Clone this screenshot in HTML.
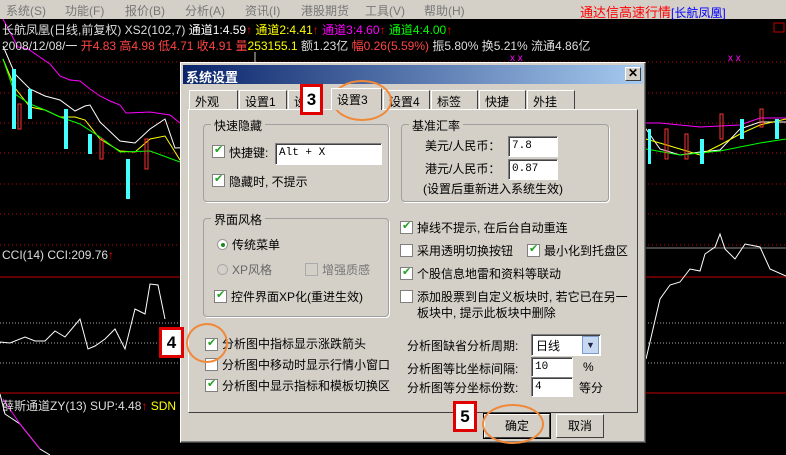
<!DOCTYPE html>
<html><head><meta charset="utf-8"><style>
*{margin:0;padding:0;box-sizing:border-box}
body{width:786px;height:455px;overflow:hidden;background:#000;position:relative;font-family:"Liberation Sans","Noto Sans CJK SC","WenQuanYi Zen Hei",sans-serif;font-size:12px}
.a{position:absolute;white-space:nowrap}
#menu{left:0;top:0;width:786px;height:19px;background:#d4d0c8}
#menu span{position:absolute;top:2px;color:#777;font-size:12px}
.dlg{left:180px;top:62px;width:466px;height:381px;background:#d4d0c8;border:1px solid;border-color:#fff #404040 #404040 #fff;box-shadow:inset -1px -1px #808080}
.title{left:2px;top:2px;width:460px;height:19px;background:linear-gradient(90deg,#0a246a,#a6caf0);color:#fff;font-weight:bold;font-size:13px;padding:2px 3px}
.xb{right:4px;top:4px;width:16px;height:14px;background:#d4d0c8;border:1px solid;border-color:#fff #404040 #404040 #fff;color:#000;font-size:12px;line-height:11px;text-align:center;font-weight:bold}
.tab{top:27px;height:20px;border:1px solid;border-color:#fff #404040 transparent #fff;border-bottom:none;padding:2px 5px;font-size:12px;color:#000;background:#d4d0c8}
.panel{left:7px;top:46px;width:450px;height:304px;border:1px solid;border-color:#fff #404040 #404040 #fff}
.grp{border:1px solid #a0a0a0;border-radius:4px;box-shadow:1px 1px #fff}
.gl{background:#d4d0c8;padding:0 3px;font-size:12px;color:#000}
.cb{width:13px;height:13px;background:#fff;border:1px solid #808080;display:inline-block;position:absolute}
.cb.k::after{content:"✔";position:absolute;left:1px;top:-3px;color:#21a121;font-size:11px}
.t{color:#000;font-size:12px}
.inp{background:#fff;border:1px solid;border-color:#808080 #fff #fff #808080;box-shadow:inset 1px 1px #404040;font-family:"Liberation Mono",monospace;font-size:11px;padding:3px 3px}
.btn{border:1px solid;border-color:#fff #404040 #404040 #fff;background:#d4d0c8;text-align:center;font-size:12px;line-height:22px;color:#000}
.rb{border:3px solid #e00000;background:#fff;color:#000;font-weight:bold;font-size:17px;text-align:center;font-family:"Liberation Sans",sans-serif}
.ov{border:2px solid #f0883a;border-radius:50%}
</style></head><body>
<div id="menu" class="a">
<span style="left:6px">系统(S)</span><span style="left:65px">功能(F)</span><span style="left:125px">报价(B)</span><span style="left:185px">分析(A)</span><span style="left:245px">资讯(I)</span><span style="left:301px">港股期货</span><span style="left:365px">工具(V)</span><span style="left:424px">帮助(H)</span>
<span style="left:580px;color:#f00;font-size:13px;top:2px">通达信高速行情<span style="color:#00f">[长航凤凰]</span></span>
</div>
<svg class="a" style="left:0;top:19px" width="786" height="436">
<g stroke="#c00000" stroke-dasharray="1,3">
<line x1="0" y1="43" x2="786" y2="43"/><line x1="0" y1="74" x2="786" y2="74"/><line x1="0" y1="104" x2="786" y2="104"/><line x1="0" y1="134" x2="786" y2="134"/><line x1="0" y1="165" x2="786" y2="165"/><line x1="0" y1="195" x2="786" y2="195"/><line x1="0" y1="226" x2="786" y2="226"/>
</g>
<line x1="646" y1="229" x2="786" y2="229" stroke="#888"/>
<line x1="0" y1="258" x2="786" y2="258" stroke="#c00000"/>
<g stroke="#aaa" stroke-dasharray="1,2"><line x1="0" y1="304" x2="786" y2="304"/><line x1="0" y1="324" x2="786" y2="324"/><line x1="0" y1="344" x2="786" y2="344"/></g>
<line x1="0" y1="374" x2="786" y2="374" stroke="#c00000"/>
<line x1="255" y1="33" x2="255" y2="43" stroke="#ccc"/>
<polyline fill="none" stroke="#f0f" points="3,0 18,28 28,30 50,45 60,57 70,61 80,62 90,70 100,77 110,82 120,86 126,94 150,93 170,96 180,104 646,104 660,104 700,108 740,106 760,99 786,99"/>
<polyline fill="none" stroke="#fff" points="3,27 15,55 30,70 45,77 60,81 75,92 85,87 90,86 100,103 120,122 135,124 150,110 165,100 175,129 646,110 660,130 680,136 700,133 720,131 740,110 760,103 786,103"/>
<polyline fill="none" stroke="#ff0" points="3,40 15,69 30,88 45,91 60,98 75,98 85,101 100,120 120,132 135,133 150,120 165,117 180,141 646,120 670,127 700,136 720,126 740,115 760,106 786,100"/>
<polyline fill="none" stroke="#0f0" points="3,40 15,75 30,85 45,91 60,98 80,105 100,118 120,133 150,132 180,143 646,130 680,136 720,132 760,124 786,120"/>
<g fill="#4ff"><rect x="12" y="50" width="4" height="60"/><rect x="28" y="70" width="4" height="30"/><rect x="64" y="90" width="4" height="40"/><rect x="88" y="115" width="4" height="20"/><rect x="126" y="140" width="4" height="40"/><rect x="700" y="120" width="4" height="25"/><rect x="740" y="100" width="4" height="20"/><rect x="648" y="110" width="3" height="35"/><rect x="775" y="100" width="4" height="20"/></g>
<g fill="none" stroke="#f33"><rect x="18" y="85" width="3" height="25"/><rect x="100" y="120" width="3" height="20"/><rect x="145" y="120" width="3" height="30"/><rect x="665" y="110" width="3" height="30"/><rect x="685" y="115" width="3" height="25"/><rect x="720" y="95" width="3" height="25"/><rect x="760" y="90" width="3" height="18"/></g>
<polyline fill="none" stroke="#fff" points="0,375 0,375 5,395 20,405 40,430 50,436"/>
<polyline fill="none" stroke="#f0f" points="3,380 20,405 40,430"/>
<polyline fill="none" stroke="#fff" points="0,323 10,324 25,318 35,322 45,322 55,312 65,318 80,300 88,330 95,327 105,320 115,310 125,330 135,290 145,295 150,265 158,266 165,300"/>
<polyline fill="none" stroke="#fff" points="646,340 660,280 670,266 680,263 690,250 700,252 705,235 715,228 720,215 725,230 735,240 745,225 760,228 770,250 786,257"/>
<text x="510" y="42" fill="#f0f" font-size="10">x x</text><text x="728" y="42" fill="#f0f" font-size="10">x x</text>
<rect x="774" y="4" width="10" height="9" fill="none" stroke="#c00000"/>
</svg>
<div class="a" style="left:2px;top:21px;color:#ddd;font-size:12px">长航凤凰(日线,前复权) XS2(102,7) <span style="color:#fff">通道1:4.59</span><span style="color:#f00">↑</span> <span style="color:#ff0">通道2:4.41</span><span style="color:#f00">↑</span> <span style="color:#f0f">通道3:4.60</span><span style="color:#f00">↑</span> <span style="color:#0f0">通道4:4.00</span><span style="color:#f00">↑</span></div>
<div class="a" style="left:2px;top:37px;color:#ddd;font-size:12px">2008/12/08/一 <span style="color:#f44">开4.83 高4.98 低4.71 收4.91</span> <span style="color:#ff0"><span style="color:#f44">量</span>253155.1</span> 额1.23亿 <span style="color:#f44">幅0.26(5.59%)</span> 振5.80% 换5.21% 流通4.86亿</div>
<div class="a" style="left:2px;top:248px;color:#ddd;font-size:12px">CCI(14) CCI:209.76<span style="color:#f00">↑</span></div>
<div class="a" style="left:2px;top:397px;color:#ddd;font-size:12px">薛斯通道ZY(13) SUP:4.48<span style="color:#f00">↑</span> <span style="color:#ff0">SDN</span></div>

<div class="a dlg">
<div class="a title">系统设置</div>
<div class="a xb">✕</div>
<div class="a tab" style="left:8px;width:49px">外观</div>
<div class="a tab" style="left:58px;width:48px">设置1</div>
<div class="a tab" style="left:107px;width:30px">设</div>
<div class="a tab" style="left:150px;top:25px;height:22px;width:51px;z-index:2">设置3</div>
<div class="a tab" style="left:202px;width:47px">设置4</div>
<div class="a tab" style="left:250px;width:47px">标签</div>
<div class="a tab" style="left:298px;width:47px">快捷</div>
<div class="a tab" style="left:346px;width:48px">外挂</div>
<div class="a panel"></div>
<div class="a grp" style="left:22px;top:61px;width:186px;height:78px"></div>
<div class="a gl" style="left:30px;top:54px">快速隐藏</div>
<span class="cb k" style="left:31px;top:82px"></span><span class="a t" style="left:48px;top:81px">快捷键:</span>
<div class="a inp" style="left:94px;top:80px;width:107px;height:22px">Alt + X</div>
<span class="cb k" style="left:31px;top:111px"></span><span class="a t" style="left:48px;top:110px">隐藏时, 不提示</span>
<div class="a grp" style="left:220px;top:61px;width:208px;height:78px"></div>
<div class="a gl" style="left:228px;top:54px">基准汇率</div>
<span class="a t" style="left:244px;top:74px">美元/人民币：</span><div class="a inp" style="left:327px;top:73px;width:50px;height:21px">7.8</div>
<span class="a t" style="left:244px;top:97px">港元/人民币：</span><div class="a inp" style="left:327px;top:96px;width:50px;height:21px">0.87</div>
<span class="a t" style="left:242px;top:117px">(设置后重新进入系统生效)</span>
<div class="a grp" style="left:22px;top:155px;width:186px;height:99px"></div>
<div class="a gl" style="left:30px;top:148px">界面风格</div>
<span class="a" style="left:36px;top:176px;width:11px;height:11px;border-radius:50%;background:#fff;border:1px solid #999"><span class="a" style="left:3px;top:3px;width:4px;height:4px;border-radius:50%;background:#1a8a1a"></span></span>
<span class="a t" style="left:51px;top:173px">传统菜单</span>
<span class="a" style="left:36px;top:201px;width:11px;height:11px;border-radius:50%;background:#d4d0c8;border:1px solid #aaa"></span>
<span class="a t" style="left:51px;top:198px;color:#666">XP风格</span>
<span class="cb" style="left:124px;top:200px;background:#d4d0c8;border-color:#aaa"></span><span class="a t" style="left:141px;top:198px;color:#777">增强质感</span>
<span class="cb k" style="left:33px;top:227px"></span><span class="a t" style="left:50px;top:225px">控件界面XP化(重进生效)</span>
<span class="cb k" style="left:219px;top:158px"></span><span class="a t" style="left:236px;top:156px">掉线不提示, 在后台自动重连</span>
<span class="cb" style="left:219px;top:181px"></span><span class="a t" style="left:236px;top:179px">采用透明切换按钮</span>
<span class="cb k" style="left:346px;top:181px"></span><span class="a t" style="left:363px;top:179px">最小化到托盘区</span>
<span class="cb k" style="left:219px;top:204px"></span><span class="a t" style="left:236px;top:202px">个股信息地雷和资料等联动</span>
<span class="cb" style="left:219px;top:227px"></span><span class="a t" style="left:236px;top:225px">添加股票到自定义板块时, 若它已在另一</span>
<span class="a t" style="left:236px;top:241px">板块中, 提示此板块中删除</span>
<span class="cb k" style="left:24px;top:275px"></span><span class="a t" style="left:41px;top:272px">分析图中指标显示涨跌箭头</span>
<span class="cb" style="left:24px;top:295px"></span><span class="a t" style="left:41px;top:293px">分析图中移动时显示行情小窗口</span>
<span class="cb k" style="left:24px;top:316px"></span><span class="a t" style="left:41px;top:314px">分析图中显示指标和模板切换区</span>
<span class="a t" style="left:226px;top:274px">分析图缺省分析周期:</span>
<div class="a inp" style="left:350px;top:271px;width:70px;height:22px;font-family:'Liberation Sans','Noto Sans CJK SC',sans-serif;font-size:12px;padding:2px 4px">日线</div>
<div class="a" style="left:401px;top:273px;width:17px;height:18px;background:#c8d8f0;border:1px solid #7a9ac8;color:#224;font-size:9px;text-align:center;line-height:16px">▼</div>
<span class="a t" style="left:226px;top:297px">分析图等比坐标间隔:</span>
<div class="a inp" style="left:350px;top:294px;width:42px;height:20px">10</div><span class="a t" style="left:402px;top:297px">%</span>
<span class="a t" style="left:226px;top:316px">分析图等分坐标份数:</span>
<div class="a inp" style="left:350px;top:314px;width:42px;height:20px">4</div><span class="a t" style="left:398px;top:316px">等分</span>
<div class="a btn" style="left:303px;top:351px;width:66px;height:24px;outline:1px solid #000">确定</div>
<div class="a btn" style="left:375px;top:351px;width:48px;height:24px">取消</div>
</div>

<div class="a rb" style="left:300px;top:84px;width:23px;height:31px;line-height:25px">3</div>
<div class="a ov" style="left:332px;top:80px;width:60px;height:41px"></div>
<div class="a rb" style="left:159px;top:327px;width:25px;height:31px;line-height:25px">4</div>
<div class="a ov" style="left:186px;top:323px;width:42px;height:40px"></div>
<div class="a rb" style="left:453px;top:401px;width:24px;height:31px;line-height:25px">5</div>
<div class="a ov" style="left:482px;top:404px;width:62px;height:40px"></div>
</body></html>
